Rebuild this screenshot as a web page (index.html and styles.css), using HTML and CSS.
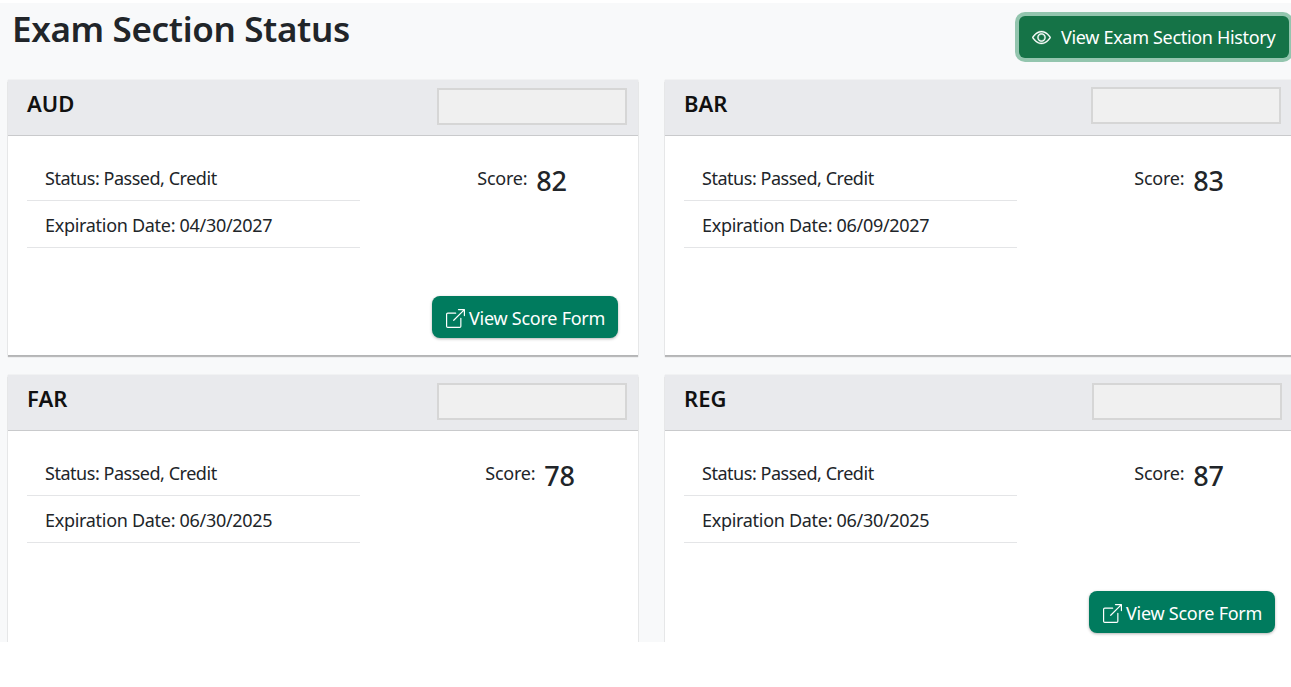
FILE: index.html
```html
<!DOCTYPE html>
<html lang="en">
<head>
<meta charset="utf-8">
<title>Exam Section Status</title>
<link rel="stylesheet" href="styles.css">
</head>
<body>
<main class="page">
  <header class="top">
    <h1 class="title">Exam Section Status</h1>
    <button class="history-btn" type="button">
      <svg class="eye" viewBox="0 0 16 16" fill="currentColor" stroke="currentColor" stroke-width="0.25" aria-hidden="true"><path d="M16 8s-3-5.500-8-5.500S0 8 0 8s3 5.500 8 5.500S16 8 16 8zM1.173 8a13.133 13.133 0 0 1 1.660-2.043C4.120 4.668 5.880 3.500 8 3.500c2.120 0 3.879 1.168 5.168 2.457A13.133 13.133 0 0 1 14.828 8c-.058.087-.122.183-.195.288-.335.480-.830 1.120-1.465 1.755C11.879 11.332 10.119 12.500 8 12.500c-2.120 0-3.879-1.168-5.168-2.457A13.134 13.134 0 0 1 1.172 8z"/><path d="M8 5.500a2.500 2.500 0 1 0 0 5 2.500 2.500 0 0 0 0-5zM4.500 8a3.500 3.500 0 1 1 7 0 3.500 3.500 0 0 1-7 0z"/></svg>
      View Exam Section History
    </button>
  </header>
  <section class="grid">
    <article class="card">
      <div class="card-head"><h2 class="card-name">AUD</h2><div class="blank"></div></div>
      <div class="card-body">
        <div class="cols">
          <ul class="facts"><li class="status">Status: Passed, Credit</li><li>Expiration Date: 04/30/2027</li></ul>
          <div class="score"><span class="score-label">Score:</span><span class="score-value">82</span></div>
        </div>
        <div class="actions"><button class="form-btn" type="button"><svg class="ext" viewBox="0 0 16 16" fill="currentColor" aria-hidden="true"><path fill-rule="evenodd" d="M8.636 3.500a.5.5 0 0 0-.5-.5H1.500A1.500 1.500 0 0 0 0 4.500v10A1.500 1.500 0 0 0 1.500 16h10a1.500 1.500 0 0 0 1.500-1.500V7.864a.5.5 0 0 0-1 0V14.500a.5.5 0 0 1-.5.5h-10a.5.5 0 0 1-.5-.5v-10a.5.5 0 0 1 .5-.5h6.636a.5.5 0 0 0 .5-.5z"/><path fill-rule="evenodd" d="M16 .5a.5.5 0 0 0-.5-.5h-5a.5.5 0 0 0 0 1h3.793L6.146 9.146a.5.5 0 1 0 .708.708L15 1.707V5.500a.5.5 0 0 0 1 0v-5z"/></svg>View Score Form</button></div>
      </div>
    </article>
    <article class="card">
      <div class="card-head"><h2 class="card-name">BAR</h2><div class="blank blank-b"></div></div>
      <div class="card-body">
        <div class="cols">
          <ul class="facts"><li class="status">Status: Passed, Credit</li><li>Expiration Date: 06/09/2027</li></ul>
          <div class="score"><span class="score-label">Score:</span><span class="score-value">83</span></div>
        </div>
      </div>
    </article>
    <article class="card">
      <div class="card-head"><h2 class="card-name">FAR</h2><div class="blank"></div></div>
      <div class="card-body">
        <div class="cols">
          <ul class="facts"><li class="status">Status: Passed, Credit</li><li>Expiration Date: 06/30/2025</li></ul>
          <div class="score score-far"><span class="score-label">Score:</span><span class="score-value">78</span></div>
        </div>
      </div>
    </article>
    <article class="card">
      <div class="card-head"><h2 class="card-name">REG</h2><div class="blank blank-d"></div></div>
      <div class="card-body">
        <div class="cols">
          <ul class="facts"><li class="status">Status: Passed, Credit</li><li>Expiration Date: 06/30/2025</li></ul>
          <div class="score"><span class="score-label">Score:</span><span class="score-value">87</span></div>
        </div>
        <div class="actions"><button class="form-btn" type="button"><svg class="ext" viewBox="0 0 16 16" fill="currentColor" aria-hidden="true"><path fill-rule="evenodd" d="M8.636 3.500a.5.5 0 0 0-.5-.5H1.500A1.500 1.500 0 0 0 0 4.500v10A1.500 1.500 0 0 0 1.500 16h10a1.500 1.500 0 0 0 1.500-1.500V7.864a.5.5 0 0 0-1 0V14.500a.5.5 0 0 1-.5.5h-10a.5.5 0 0 1-.5-.5v-10a.5.5 0 0 1 .5-.5h6.636a.5.5 0 0 0 .5-.5z"/><path fill-rule="evenodd" d="M16 .5a.5.5 0 0 0-.5-.5h-5a.5.5 0 0 0 0 1h3.793L6.146 9.146a.5.5 0 1 0 .708.708L15 1.707V5.500a.5.5 0 0 0 1 0v-5z"/></svg>View Score Form</button></div>
      </div>
    </article>
  </section>
</main>
</body>
</html>
```
FILE: styles.css
```css
* { box-sizing: border-box; }
html, body { margin: 0; padding: 0; background: #fff; overflow: hidden; }
body { font-family: "Noto Sans", "Open Sans", sans-serif; color: #212529; height: 687px; }
.page { margin-top: 3px; height: 639px; width: 1291px; background: #f8f9fa; overflow: hidden; }
.top { display: flex; justify-content: space-between; align-items: flex-start; height: 77px; padding: 7px 2px 0 12px; }
.title { margin: 0; font-size: 35px; line-height: 38px; font-weight: 600; letter-spacing: -0.35px; }
.history-btn { display: flex; align-items: center; gap: 10px; width: 270px; height: 42px; margin-top: 6px; padding: 0 0 0 13px; border: 0; border-radius: 6px; background: #157347; color: #fff; font: inherit; font-size: 18px; letter-spacing: -0.32px; box-shadow: 0 0 0 4px #93c5ae; white-space: nowrap; }
.eye { width: 19px; height: 19px; flex: none; }
.grid { display: grid; grid-template-columns: 630px 630px; grid-auto-rows: 275px; gap: 20px 27px; width: 1295px; padding-left: 8px; }
.card { display: flex; flex-direction: column; background: #fff; box-shadow: 0 2px 1px rgba(0,0,0,.25), 0 0 1px rgba(0,0,0,.18); }
.card-head { display: flex; justify-content: space-between; height: 56px; padding: 8px 11px 0 19px; background: #e9eaed; border-bottom: 1px solid #c9cacc; }
.card-name { margin: -1px 0 0; font-size: 22px; line-height: 32px; font-weight: 600; color: #111; }
.blank { width: 190px; height: 37px; background: #f0f0f0; border: 2px solid #d6d6d6; }
.blank-b { margin-top: -1px; margin-right: 3px; }
.blank-d { margin-right: 2px; }
.card-body { flex: 1; display: flex; flex-direction: column; padding: 18px 20px 17px 19px; }
.cols { flex: 1; display: flex; align-items: flex-start; }
.facts { list-style: none; margin: 0; padding: 0; width: 333px; font-size: 18px; letter-spacing: -0.3px; }
.facts li { height: 47px; padding: 1px 0 0 18px; line-height: 46px; border-bottom: 1px solid #e4e5e7; }
.facts .status { letter-spacing: -0.47px; }
.score { flex: 1; display: flex; justify-content: center; align-items: flex-start; gap: 9px; margin-left: 66px; font-size: 18px; letter-spacing: -0.25px; }
.score-far { margin-left: 82px; }
.score-label { line-height: 49px; }
.score-value { font-size: 27px; font-weight: 500; line-height: 54px; letter-spacing: -0.2px; }
.actions { display: flex; justify-content: flex-end; }
.form-btn { display: flex; align-items: center; gap: 4px; height: 42px; width: 186px; padding: 2px 0 0 14px; border: 0; border-radius: 8px; background: #007b5e; color: #fff; font: inherit; font-size: 18px; letter-spacing: -0.25px; box-shadow: 0 1px 3px rgba(0,0,0,.3); white-space: nowrap; }
.ext { width: 19px; height: 19px; flex: none; }
```
